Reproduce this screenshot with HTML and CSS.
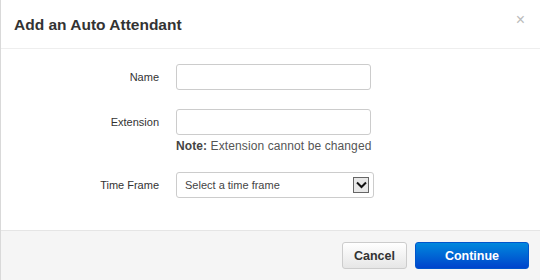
FILE: index.html
```html
<!DOCTYPE html>
<html lang="en">
<head>
    <meta charset="UTF-8">
    <title>Add an Auto Attendant</title>
    <link rel="stylesheet" href="styles.css">
</head>
<body>
    <div class="modal">
        <div class="modal-header">
            <h3>Add an Auto Attendant</h3>
            <span class="close">&times;</span>
        </div>
        <div class="modal-body">
            <div class="form-row">
                <label>Name</label>
                <div class="field"><input type="text" class="text-input"></div>
            </div>
            <div class="form-row">
                <label>Extension</label>
                <div class="field">
                    <input type="text" class="text-input">
                    <div class="note"><b>Note:</b> Extension cannot be changed</div>
                </div>
            </div>
            <div class="form-row">
                <label>Time Frame</label>
                <div class="field">
                    <div class="select">
                        <span>Select a time frame</span>
                        <span class="arrow">
                            <svg width="11" height="8" viewBox="0 0 11 8"><path d="M1 1.5 L5.5 6 L10 1.5" fill="none" stroke="#111" stroke-width="2"/></svg>
                        </span>
                    </div>
                </div>
            </div>
        </div>
        <div class="modal-footer">
            <button class="btn">Cancel</button>
            <button class="btn btn-primary">Continue</button>
        </div>
    </div>
</body>
</html>
```

FILE: styles.css
```css
body {
    margin: 0;
    font-family: "Liberation Sans", Arial, sans-serif;
    background-color: #fff;
}
.modal {
    width: 540px;
    height: 280px;
    display: flex;
    flex-direction: column;
    border-left: 1px solid #d9d9d9;
    box-sizing: border-box;
}
.modal-header {
    height: 48px;
    display: flex;
    align-items: center;
    justify-content: space-between;
    padding: 0 15px 0 13px;
    border-bottom: 1px solid #eee;
}
.modal-header h3 {
    margin: 0;
    font-size: 15.5px;
    font-weight: bold;
    color: #333;
    padding-top: 2px;
}
.close {
    color: #bbb;
    font-size: 16px;
    margin-top: -8px;
}
.modal-body {
    flex: 1;
    padding-top: 15px;
}
.form-row {
    display: flex;
    align-items: flex-start;
    margin-bottom: 19px;
}
.form-row label {
    width: 158px;
    text-align: right;
    font-size: 11px;
    color: #333;
    padding-top: 7px;
}
.field {
    margin-left: 17px;
}
.text-input {
    display: block;
    width: 195px;
    height: 26px;
    box-sizing: border-box;
    border: 1px solid #ccc;
    border-radius: 3px;
    margin: 0;
}
.note {
    font-size: 12px;
    color: #555;
    margin-top: 4px;
    letter-spacing: 0.1px;
}
.note b {
    color: #444;
}
.select {
    width: 198px;
    height: 26px;
    box-sizing: border-box;
    border: 1px solid #ccc;
    border-radius: 3px;
    display: flex;
    align-items: center;
    justify-content: space-between;
    padding: 0 4px 0 8px;
    font-size: 11px;
    color: #444;
}
.arrow {
    width: 16px;
    height: 16px;
    box-sizing: border-box;
    border: 1px solid #666;
    background-color: #e8e8e8;
    display: flex;
    align-items: center;
    justify-content: center;
}
.modal-footer {
    height: 49px;
    background-color: #f5f5f5;
    border-top: 1px solid #e5e5e5;
    display: flex;
    justify-content: flex-end;
    align-items: center;
    padding: 0 11px;
    gap: 8px;
}
.btn {
    height: 27px;
    width: 65px;
    padding: 0;
    font-family: "Liberation Sans", Arial, sans-serif;
    font-size: 12.5px;
    font-weight: bold;
    color: #333;
    border: 1px solid #ccc;
    border-radius: 3px;
    background: linear-gradient(#fff, #e6e6e6);
}
.btn-primary {
    width: 114px;
    color: #fff;
    border-color: #0055cc;
    background: linear-gradient(#0088dd, #0044cc);
}
```
